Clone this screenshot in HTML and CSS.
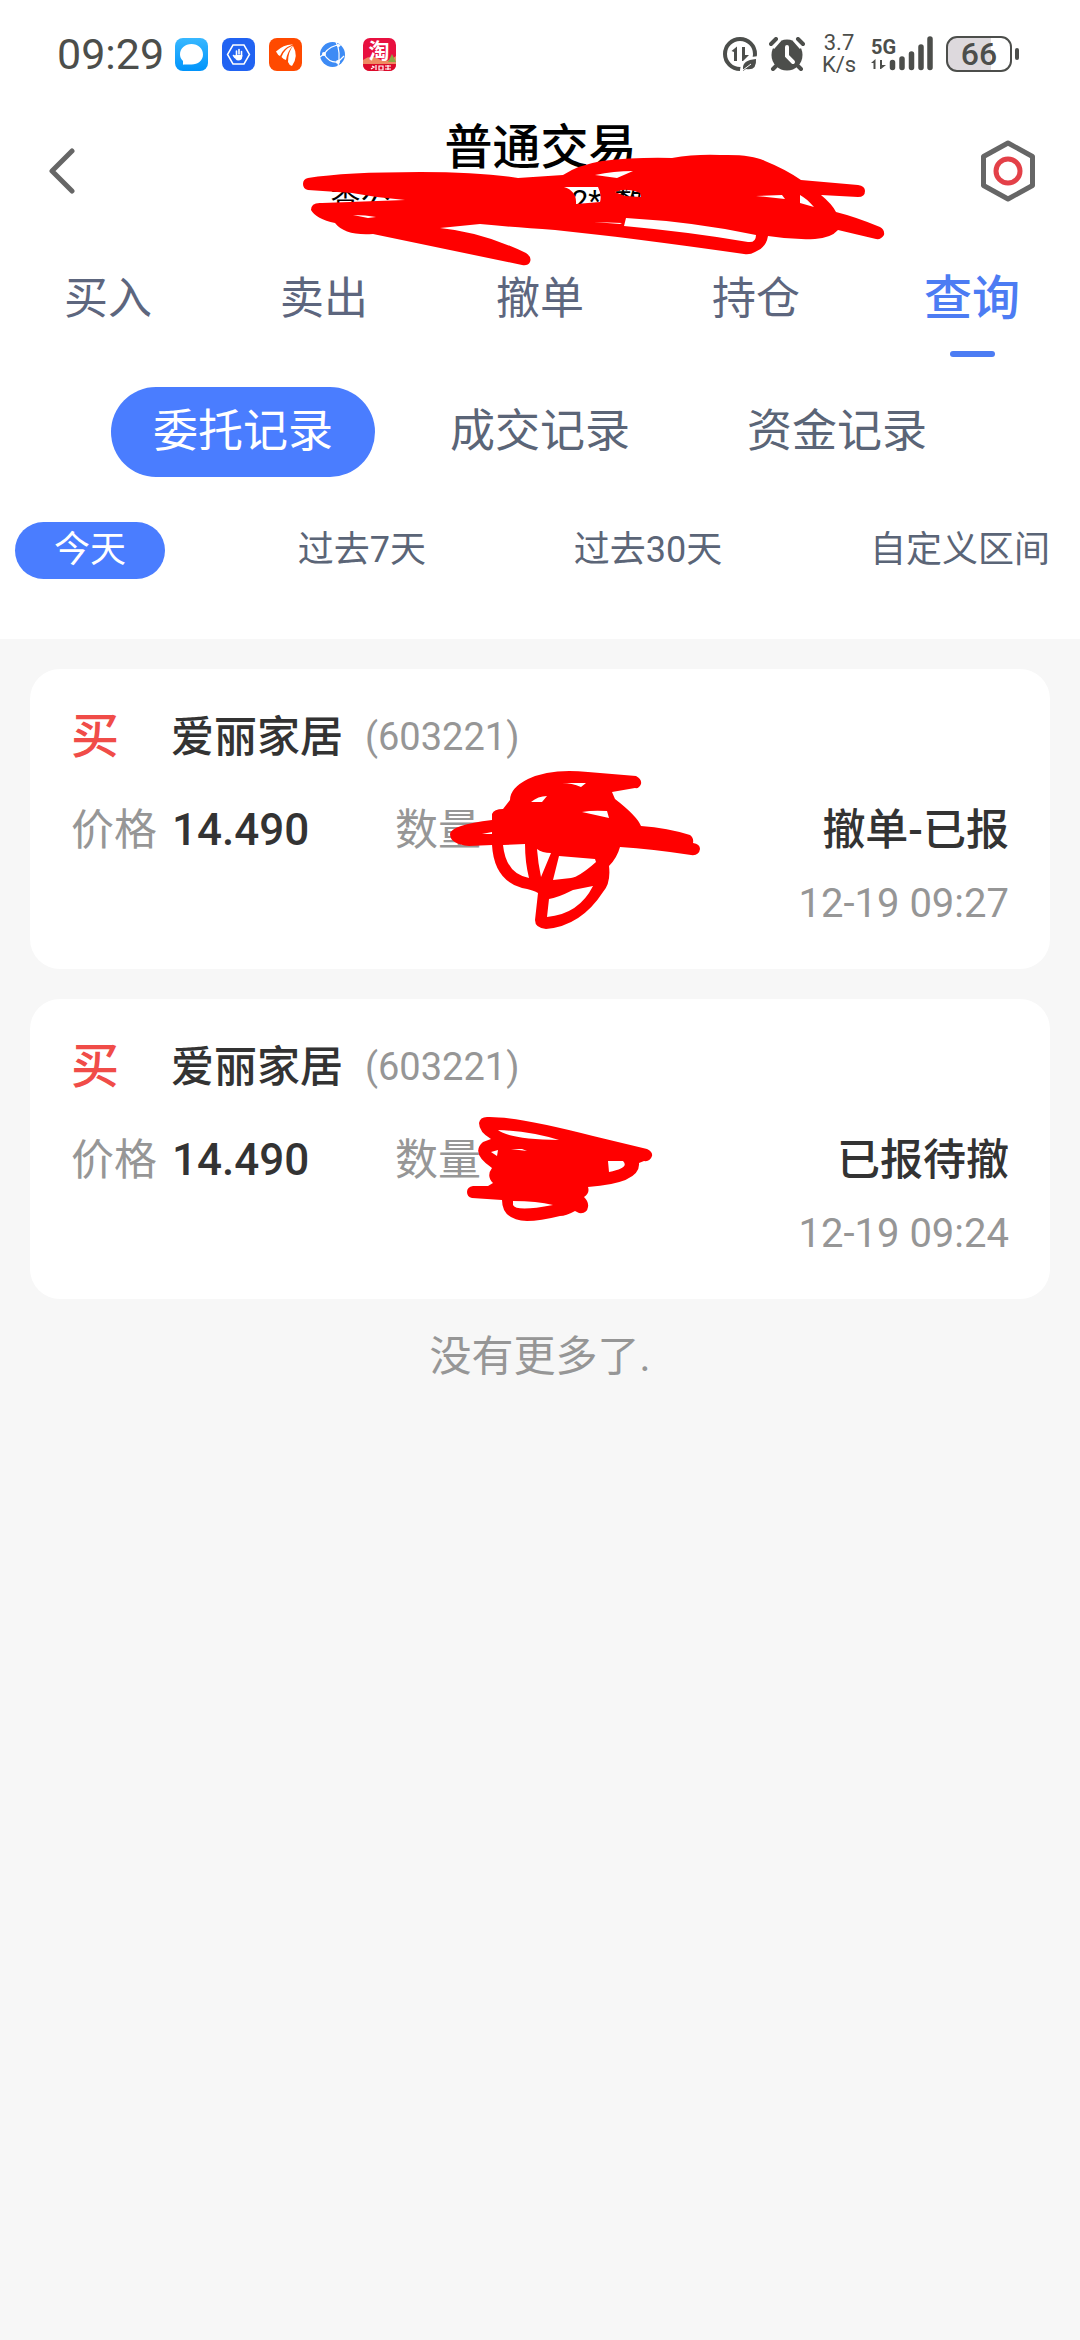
FILE: index.html
```html
<!DOCTYPE html>
<html lang="zh-CN">
<head>
<meta charset="utf-8">
<meta name="viewport" content="width=device-width, initial-scale=1">
<title>普通交易</title>
<link rel="stylesheet" href="styles.css">
</head>
<body>
<header class="top">
  <div class="status">
    <div class="status-left">
      <time class="clock">09:29</time>
      <svg class="app" viewBox="0 0 33 33" aria-hidden="true"><defs><linearGradient id="sky" x2="0" y2="1"><stop offset="0" stop-color="#38b8ff"/><stop offset="1" stop-color="#0094fb"/></linearGradient></defs><rect width="33" height="33" rx="8" fill="url(#sky)"/><path d="M16.500 6C23 6 28 10.500 28 16.500S23 26.500 16.500 26.500H9Q7.500 27 8 25.500V23C6 21 5 19 5 16.500C5 10.500 10 6 16.500 6Z" fill="#fff"/></svg>
      <svg class="app" viewBox="0 0 33 33" aria-hidden="true"><rect width="33" height="33" rx="8" fill="#2163f2"/><path d="M11 7h11l5.500 9.500L22 26H11L5.500 16.500Z" fill="none" stroke="#fff" stroke-width="1.500"/><path d="M11.500 17.500l1.500 2M14.500 17v-4M17 16v-4.500M19.500 18v-4.500" stroke="#fff" stroke-width="1.600" stroke-linecap="round"/><path d="M12 17.500l2-.5h6.300v1.500c0 3-1.800 4-4 4S13 21 12 17.500Z" fill="#fff"/></svg>
      <svg class="app" viewBox="0 0 33 33" aria-hidden="true"><rect width="33" height="33" rx="8" fill="#ff4a00"/><path d="M7 13.500Q15 6 24 6.500Q14 10 11 18Q9 17.500 7 13.500ZM12.500 19Q15 11 24 7.500Q18 14 17 22Q15 22 12.500 19ZM19 24Q19 14 24 8Q30 18 23 28Q20 27 19 24Z" fill="#fff"/></svg>
      <svg class="app" viewBox="0 0 33 33" aria-hidden="true"><circle cx="16.500" cy="16.500" r="12.500" fill="#3d8bf5"/><path d="M4 19L8 16Q14 7 25 7M8 16Q13 25 22 24M20 4Q25 13 22 29M22 24L28 18" fill="none" stroke="#fff" stroke-width="1.200"/><circle cx="8" cy="16" r="2" fill="#fff"/><circle cx="22" cy="24" r="2" fill="#fff"/><circle cx="22.500" cy="7.500" r="1.500" fill="#fff"/></svg>
      <svg class="app" viewBox="0 0 33 33" aria-hidden="true"><rect width="33" height="33" rx="7" fill="#e81040"/><path d="M0 22Q8 16 16 21T33 18V27H0Z" fill="#ef8a62"/><path d="M25 24l4-8 4 8Z" fill="#8ba843"/><path d="M0 26h33q0 7-7 7H7q-7 0-7-7Z" fill="#dc0a2a"/><text class="app-glyph" x="16" y="20" text-anchor="middle">淘</text><path d="M9 28l2 1-3 2M13 27v5M16 28h4v4h-4zM22 28h6M25 27v5M22 31h6" fill="none" stroke="#fff" stroke-width="1.200"/></svg>
    </div>
    <div class="status-right">
      <svg class="saver" viewBox="0 0 34 34" aria-hidden="true"><circle cx="17" cy="17" r="15" fill="none" stroke="#4c4e4b" stroke-width="4"/><path d="M8.500 14L14 9.500V24H11V15ZM19 10h3v8h4l-6 6h-1Z" fill="#4c4e4b"/><path d="M17 36Q16 20 36 19v17Z" fill="#fff"/><path d="M20 32Q19 23 33 22Q34 34 23 32L20 34Z" fill="#4c4e4b"/><path d="M20 33L28 27" stroke="#fff" stroke-width="1"/></svg>
      <svg class="alarm" viewBox="0 0 36 34" aria-hidden="true"><circle cx="18" cy="18" r="15.500" fill="#4c4e4b"/><path d="M4 11L11 3M32 11L25 3" stroke="#fff" stroke-width="3"/><path d="M2 7L7 2M34 7L29 2M7 29L4 32M29 29L32 32" stroke="#4c4e4b" stroke-width="4" stroke-linecap="round"/><path d="M18 10v9l6 6" fill="none" stroke="#fff" stroke-width="4" stroke-linecap="round"/></svg>
      <span class="speed"><span>3.7</span><span>K/s</span></span>
      <svg class="signal" viewBox="0 0 63 36" aria-hidden="true"><text class="net" x="0" y="18">5G</text><path d="M0 27l4.500-4V33H2.500V27ZM9 24h2v5h4l-5 4H9Z" fill="#4c4e4b"/><path d="M21.500 26.500v5M31 23v8.500M40.500 18v13.500M50 11v20.500M59 3v28.500" stroke="#4c4e4b" stroke-width="5.500" stroke-linecap="round"/></svg>
      <svg class="battery" viewBox="0 0 74 36" aria-hidden="true"><path d="M11 1h34v34H11Q1 35 1 25V11Q1 1 11 1Z" fill="#ddd9dd"/><rect x="1" y="1" width="64" height="34" rx="10" fill="none" stroke="#4c4e4b" stroke-width="2"/><path d="M71 14v8" stroke="#4c4e4b" stroke-width="4" stroke-linecap="round"/><text class="level" x="33" y="29" text-anchor="middle">66</text></svg>
    </div>
  </div>

  <div class="appbar">
    <button class="icon-btn" aria-label="返回"><svg class="back" viewBox="0 0 26 48" aria-hidden="true"><path d="M23 4L3 24L23 44" fill="none" stroke="#666" stroke-width="5" stroke-linecap="round" stroke-linejoin="round"/></svg></button>
    <div class="heading">
      <h1 class="title">普通交易</h1>
      <p class="account"><span>查公</span><span>2**数</span></p>
    </div>
    <button class="icon-btn icon-btn-end" aria-label="设置"><svg class="hex" viewBox="0 0 56 62" aria-hidden="true"><path d="M28 3L52.500 16.500V45.500L28 59L3.500 45.500V16.500Z" fill="none" stroke="#666" stroke-width="5" stroke-linejoin="round"/><circle cx="28" cy="31" r="12" fill="none" stroke="#e34048" stroke-width="5"/></svg></button>
    <svg class="mark mark-account" viewBox="302 152 584 116" aria-hidden="true"><path fill="red" fill-rule="evenodd" d="M308 178Q345 172 420 172Q480 172 518 178L563 175Q578 165 602 161Q636 157 672 158Q695 154 720 155Q752 154 765 161Q785 169 801 180L858 185Q865 186 865 191Q865 197 858 197L821 195Q832 204 836 212Q856 217 880 227Q885 230 884 235Q881 240 876 239L838 230Q831 238 815 239Q792 240 768 236Q766 248 755 252Q750 255 744 254Q660 242 600 235L555 230Q510 227 480 224L440 228Q482 232 526 253Q532 257 530 262Q528 266 522 265L373 234Q345 236 335 223Q316 219 311 210Q311 202 322 203L405 200Q378 198 352 193L308 190Q303 189 303 184Q303 179 308 178ZM353 215Q366 215 376 217L368 218ZM564 187L598 187Q602 195 600 202L576 204Q577 191 564 187ZM595 175Q614 171 633 171L617 178ZM615 192Q627 187 640 193L641 197L625 196ZM626 218Q696 222 756 235Q756 243 748 242Q690 232 624 226ZM594 222L622 223L620 224ZM756 196L782 195L785 199ZM800 195Q806 198 814 207L800 203ZM723 176L732 178Z"/></svg>
  </div>

  <nav class="tabs" aria-label="交易">
    <button class="tab">买入</button>
    <button class="tab">卖出</button>
    <button class="tab">撤单</button>
    <button class="tab">持仓</button>
    <button class="tab tab-active" aria-current="page">查询</button>
  </nav>

  <div class="pills">
    <button class="pill pill-active">委托记录</button>
    <button class="pill">成交记录</button>
    <button class="pill">资金记录</button>
  </div>

  <div class="ranges">
    <button class="range range-active">今天</button>
    <button class="range">过去7天</button>
    <button class="range">过去30天</button>
    <button class="range">自定义区间</button>
  </div>
</header>

<main class="orders">
  <article class="card">
    <div class="stock"><span class="side">买</span><h2 class="name">爱丽家居</h2><span class="code">(603221)</span></div>
    <div class="detail">
      <span class="pair"><span class="label">价格</span><b class="value price">14.490</b></span>
      <span class="label">数量</span>
      <b class="value">撤单-已报</b>
    </div>
    <time class="when">12-19 09:27</time>
    <svg class="mark mark-first" viewBox="449 770 253 160" aria-hidden="true"><path fill="red" fill-rule="evenodd" d="M450 834Q451 825 492 820V814Q494 809 503 809L510 800Q510 788 528 779Q551 768 588 772L636 776Q642 779 641 784Q639 789 635 788L612 792L615 799Q637 816 641 826Q668 828 690 835Q694 838 693 843Q700 844 700 849Q699 856 691 855Q652 849 620 847Q617 858 609 866Q611 883 603 892Q581 926 546 929Q535 928 535 920L538 893Q533 890 522 888Q494 880 492 845L469 846Q450 844 450 834ZM562 783L586 783L581 787Q572 783 562 783ZM531 802Q538 796 547 796L542 802ZM582 812Q592 810 607 811L609 818ZM503 845L525 844Q525 862 529 878Q506 874 503 845ZM537 849Q542 853 551 853L541 877Q538 863 537 849ZM559 856L595 859L596 862Q579 877 571 878L553 880ZM549 899Q557 898 573 890L593 886Q579 914 547 917ZM482 834L492 832V834Z"/></svg>
  </article>
  <article class="card">
    <div class="stock"><span class="side">买</span><h2 class="name">爱丽家居</h2><span class="code">(603221)</span></div>
    <div class="detail">
      <span class="pair"><span class="label">价格</span><b class="value price">14.490</b></span>
      <span class="label">数量</span>
      <b class="value">已报待撤</b>
    </div>
    <time class="when">12-19 09:24</time>
    <svg class="mark mark-second" viewBox="466 1116 187 106" aria-hidden="true"><path fill="red" fill-rule="evenodd" d="M479 1123Q480 1117 487 1117Q515 1116 593 1136L647 1149Q653 1152 652 1156Q650 1162 644 1161L639 1163Q641 1183 588 1187Q590 1193 584 1197Q589 1202 588 1207Q587 1214 579 1213L575 1211Q566 1216 560 1216Q540 1221 527 1221Q502 1220 502 1200L472 1198Q467 1197 467 1192Q467 1187 473 1186L488 1186L493 1183Q486 1176 492 1168Q470 1153 483 1142L491 1139Q479 1132 479 1123ZM498 1130Q530 1131 559 1140Q509 1139 498 1130ZM491 1152L498 1150L497 1156ZM608 1161L623 1161Q630 1168 609 1172ZM513 1201Q537 1201 553 1205Q516 1212 513 1205ZM511 1149L522 1149L527 1151Z"/></svg>
  </article>
  <p class="end">没有更多了.</p>
</main>
</body>
</html>
```

FILE: styles.css
```css
* {
  box-sizing: border-box;
}

body {
  margin: 0;
  min-height: 100vh;
  background: #f7f7f7;
  color: #333;
  font-family: Roboto, "Noto Sans CJK SC", sans-serif;
}

h1,
h2,
p {
  margin: 0;
}

button {
  margin: 0;
  padding: 0;
  border: 0;
  background: none;
  color: inherit;
  font: inherit;
}

svg {
  display: block;
}

.top {
  padding-bottom: 60px;
  background: #fff;
}

/* Status bar */
.status {
  display: flex;
  justify-content: space-between;
  align-items: center;
  height: 108px;
  padding: 0 60px 0 57px;
  color: #4c4e4b;
}

.status-left,
.status-right {
  display: flex;
  align-items: center;
}

.status-left {
  gap: 14px;
}

.clock {
  width: 104px;
  font-size: 43px;
  line-height: 54px;
}

.app {
  width: 33px;
  height: 33px;
}

.app-glyph {
  fill: #fff;
  font-size: 21px;
  font-weight: 700;
}

.status-right {
  gap: 12px;
}

.saver {
  width: 34px;
  height: 34px;
}

.alarm {
  width: 36px;
  height: 34px;
}

.speed {
  display: flex;
  flex-direction: column;
  align-items: center;
  width: 36px;
  margin: 0 2px 0 4px;
  font-size: 22px;
  line-height: 22px;
}

.signal {
  width: 63px;
  height: 36px;
  overflow: visible;
}

.net {
  fill: #4c4e4b;
  font-size: 20px;
  font-weight: 700;
}

.battery {
  width: 74px;
  height: 36px;
}

.level {
  fill: #4c4e4b;
  font-size: 32px;
  font-weight: 500;
}

/* Title bar */
.appbar {
  position: relative;
  display: grid;
  grid-template-columns: 120px 1fr 120px;
  align-items: center;
  height: 126px;
  padding: 0 44px 0 45px;
}

.icon-btn {
  justify-self: start;
  padding: 4px;
}

.icon-btn-end {
  justify-self: end;
  padding: 0;
}

.back {
  width: 26px;
  height: 48px;
}

.hex {
  width: 56px;
  height: 62px;
}

.heading {
  display: flex;
  flex-direction: column;
  align-items: center;
  color: #000;
}

.title {
  padding-top: 4px;
  font-size: 48px;
  font-weight: 500;
  line-height: 56px;
}

.account {
  display: flex;
  gap: 181px;
  width: 420px;
  font-size: 30px;
  line-height: 50px;
}

/* Hand-drawn strokes laid over private details */
.mark {
  position: absolute;
}

.mark-account {
  top: 44px;
  left: calc(50% - 238px);
  width: 584px;
}

.mark-first {
  top: 101px;
  left: 419px;
  width: 253px;
}

.mark-second {
  top: 117px;
  left: 436px;
  width: 187px;
}

/* Navigation */
.tabs {
  display: grid;
  grid-template-columns: repeat(5, 1fr);
}

.tab {
  display: flex;
  flex-direction: column;
  align-items: center;
  gap: 20px;
  padding-top: 33px;
  color: #5d667e;
  font-size: 44px;
  line-height: 64px;
}

.tab::after {
  width: 45px;
  height: 6px;
  border-radius: 3px;
  content: "";
}

.tab-active {
  color: #4c7cf3;
  font-size: 48px;
  font-weight: 500;
}

.tab-active::after {
  background: #4c7cf3;
}

.pills {
  display: flex;
  justify-content: center;
  gap: 33px;
  margin-top: 30px;
}

.pill {
  padding: 0 42px;
  border-radius: 45px;
  color: #5b6577;
  font-size: 45px;
  line-height: 90px;
}

.range {
  padding: 0 15px;
  border-radius: 29px;
  color: #5b6577;
  font-size: 36px;
  line-height: 57px;
}

.ranges {
  display: flex;
  justify-content: space-between;
  margin-top: 45px;
  padding: 0 15px;
}

.range-active {
  padding: 0 39px;
}

.pill-active,
.range-active {
  background: #4a7dff;
  color: #fff;
}

/* Orders */
.orders {
  display: flex;
  flex-direction: column;
  gap: 30px;
  padding: 30px;
}

.card {
  position: relative;
  padding: 38px 41px 35px 41px;
  border-radius: 30px;
  background: #fff;
}

.stock {
  display: flex;
  align-items: center;
  line-height: 60px;
}

.side {
  width: 100px;
  color: #f04c48;
  font-size: 48px;
  font-weight: 500;
}

.name {
  margin-right: 22px;
  font-size: 43px;
  font-weight: 500;
}

.code,
.when {
  color: #969696;
  font-size: 38px;
}

.detail {
  display: grid;
  grid-template-columns: 324px 1fr auto;
  margin-top: 33px;
  font-size: 43px;
  line-height: 60px;
}

.pair {
  display: flex;
  gap: 15px;
}

.label {
  color: #969696;
}

.value {
  font-weight: 500;
}

.price {
  font-size: 44px;
}

.when {
  display: block;
  margin-top: 14px;
  font-size: 40px;
  line-height: 60px;
  text-align: right;
}

.end {
  color: #969696;
  font-size: 42px;
  line-height: 56px;
  text-align: center;
}
```
